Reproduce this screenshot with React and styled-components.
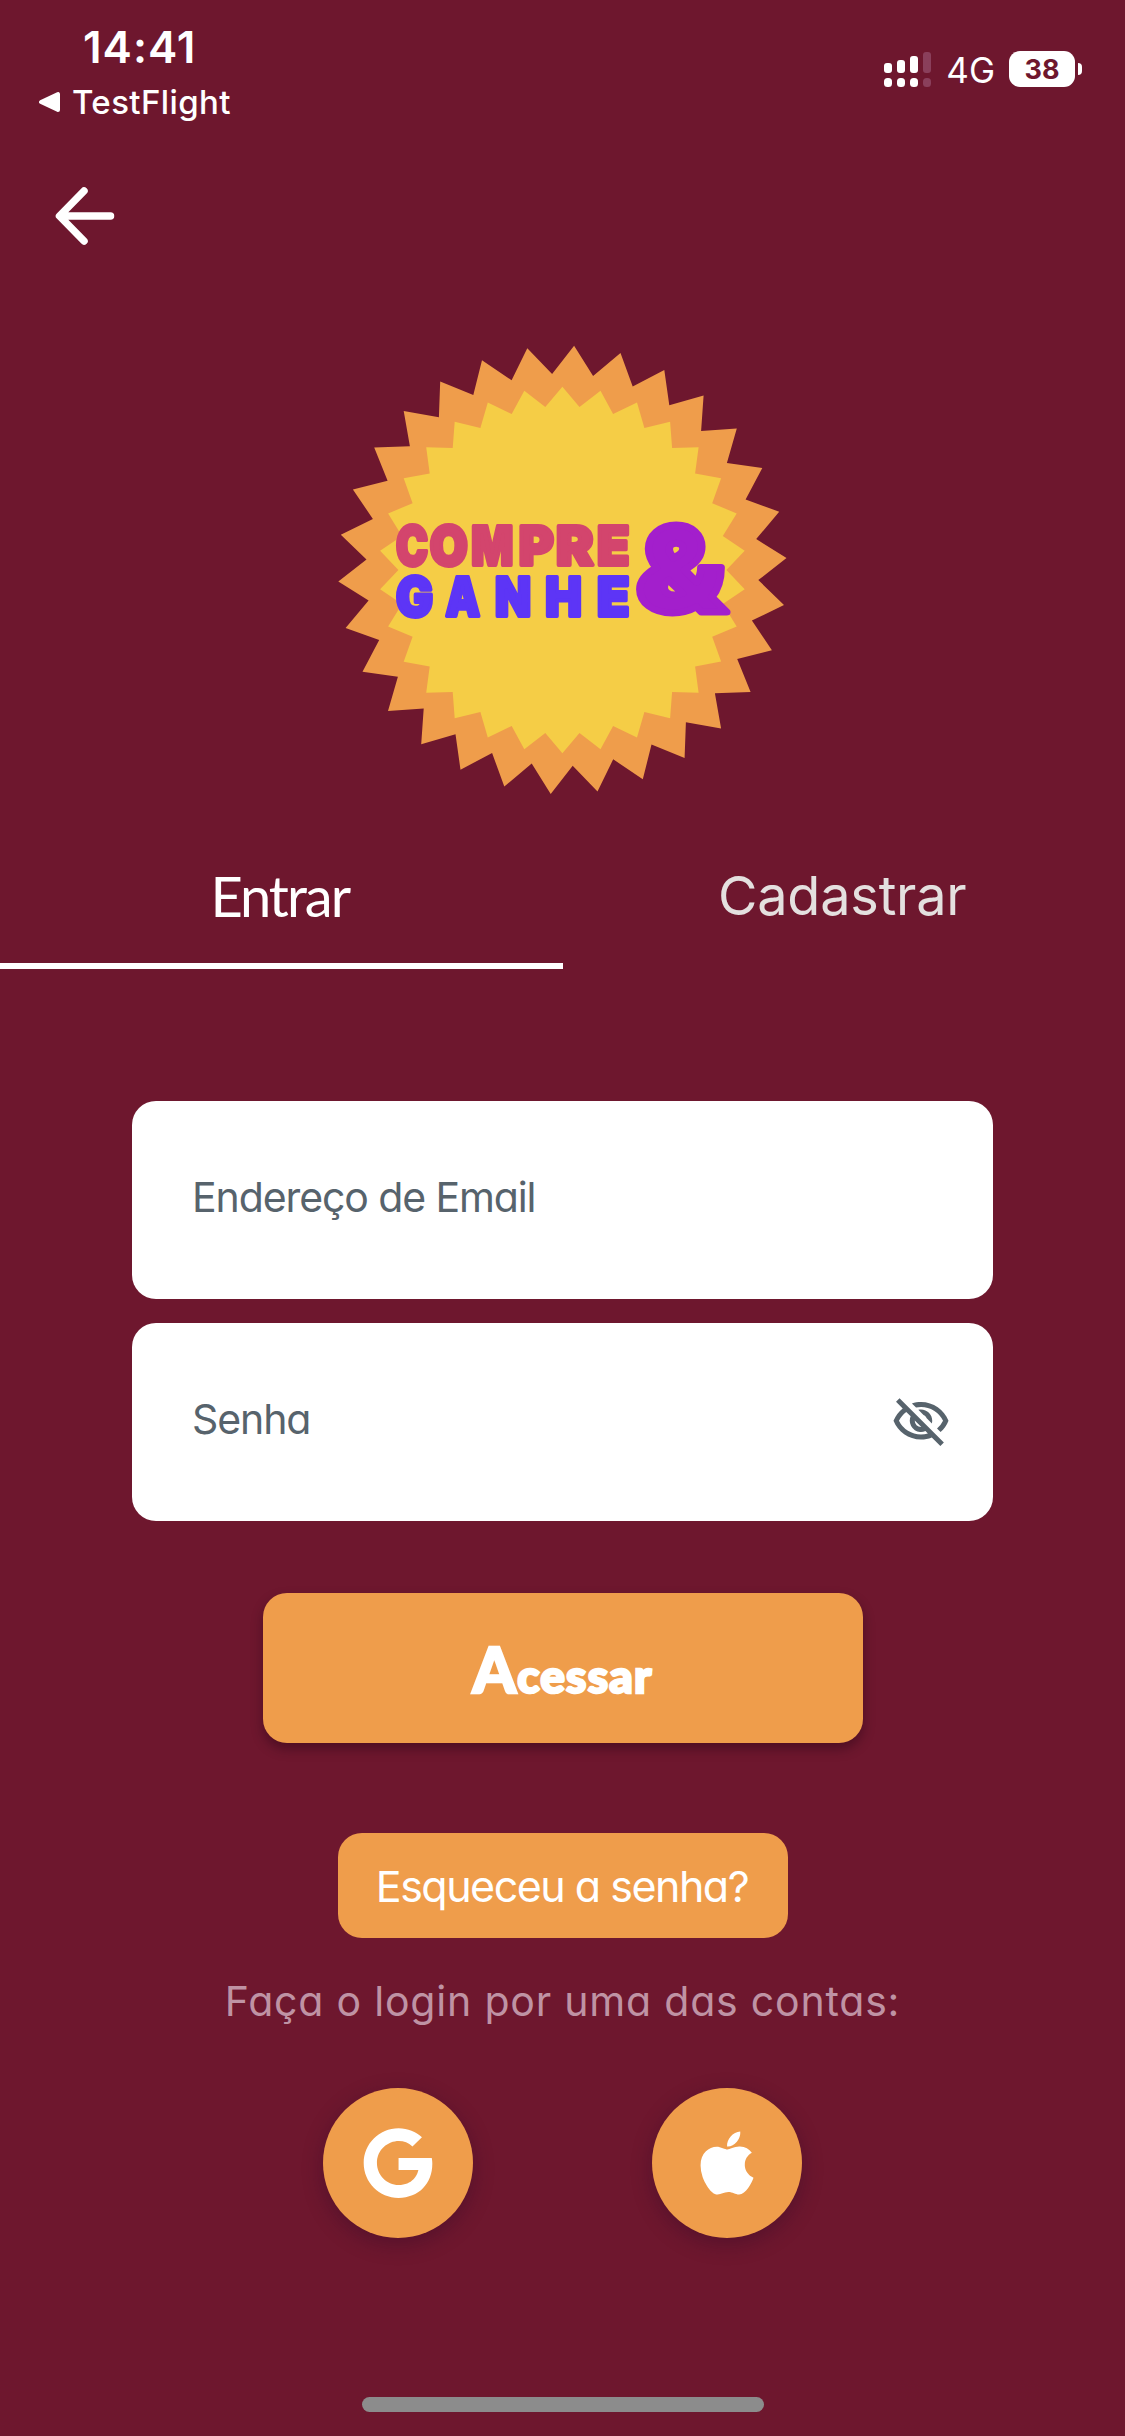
import React, { useState } from "react";
import styled, { createGlobalStyle } from "styled-components";
import { FaApple, FaGoogle } from "react-icons/fa";
import { MdOutlineVisibilityOff } from "react-icons/md";

const GlobalStyle = createGlobalStyle`
  * {
    box-sizing: border-box;
  }

  body {
    margin: 0;
    background: #6e172e;
  }

  button,
  input {
    margin: 0;
    padding: 0;
    border: 0;
    background: none;
    font-family: inherit;
  }
`;

const Screen = styled.div`
  display: flex;
  flex-direction: column;
  align-items: center;
  width: 1125px;
  height: 2436px;
  overflow: hidden;
  background: #6e172e;
  color: #ffffff;
  font-family: Inter, "Liberation Sans", sans-serif;
`;

const StatusBar = styled.header`
  display: flex;
  justify-content: space-between;
  width: 100%;
  height: 132px;
  padding: 20px 43px 0 39px;
`;

const Clock = styled.div`
  padding-left: 44px;
  font-size: 44px;
  font-weight: 600;
  line-height: 54px;
  letter-spacing: 1px;
`;

const BackToApp = styled.div`
  display: flex;
  align-items: center;
  gap: 11px;
  margin-top: 7px;
  font-size: 33px;
  font-weight: 500;
  line-height: 42px;
  letter-spacing: 0.4px;
`;

const StatusIcons = styled.div`
  display: flex;
  align-items: center;
  height: 36px;
  margin-top: 31px;
`;

const Network = styled.span`
  margin: 2px 14px 0 15px;
  font-size: 35px;
  line-height: 36px;
`;

const Battery = styled.span`
  width: 66px;
  height: 36px;
  border-radius: 11px;
  background: #ffffff;
  color: #6e172e;
  font-size: 27px;
  font-weight: 700;
  line-height: 37px;
  text-align: center;
`;

const BatteryCap = styled.span`
  width: 4px;
  height: 12px;
  margin-left: 3px;
  border-radius: 0 6px 6px 0;
  background: #ffffff;
`;

const BackButton = styled.button`
  align-self: flex-start;
  width: 72px;
  height: 72px;
  margin: 48px 0 0 49px;
  color: #ffffff;
`;

const Logo = styled.svg`
  display: block;
  flex: none;
  width: 480px;
  height: 480px;
  margin: 78px 5px 0 0;
  font-family: Inter, "Liberation Sans", sans-serif;
  font-weight: 900;
`;

const Tabs = styled.nav`
  display: flex;
  flex: none;
  width: 100%;
  height: 129px;
  margin-top: 30px;
`;

const Tab = styled.button`
  flex: 1;
  border-bottom: 6px solid ${({ $active }) => ($active ? "#ffffff" : "transparent")};
  color: ${({ $active }) => ($active ? "#ffffff" : "#e4e0df")};
  font-size: ${({ $active }) => ($active ? "56px" : "54px")};
  font-family: ${({ $active }) =>
    $active ? 'Lato, "Liberation Sans", sans-serif' : "inherit"};
  font-weight: 400;
  line-height: 68px;
  letter-spacing: ${({ $active }) => ($active ? "-2px" : "-0.2px")};
  padding: 0 3px 12px 0;
`;

const Form = styled.form`
  display: flex;
  flex-direction: column;
  align-items: center;
  flex: none;
  width: 861px;
  margin-top: 132px;
  font-feature-settings: "cv11";
`;

const Field = styled.label`
  display: flex;
  align-items: center;
  width: 100%;
  height: 198px;
  margin-bottom: 24px;
  padding: 0 42px 0 60px;
  border-radius: 24px;
  background: #ffffff;
  color: #57636c;
`;

const Input = styled.input`
  flex: 1;
  min-width: 0;
  padding-bottom: 6px;
  outline: none;
  color: #57636c;
  font-size: 41px;
  font-feature-settings: inherit;
  letter-spacing: -1.1px;

  &::placeholder {
    color: #57636c;
    opacity: 1;
  }
`;

const SubmitButton = styled.button`
  width: 600px;
  height: 150px;
  margin-top: 48px;
  padding-top: 8px;
  border-radius: 24px;
  background: #ef9d4b;
  box-shadow: 0 6px 12px rgba(30, 0, 20, 0.4);
  color: #ffffff;
  font-family: Lato, "Liberation Sans", sans-serif;
`;

const SubmitLabel = styled.span`
  display: block;
  font-size: 46px;
  font-weight: 900;
  line-height: 64px;
  letter-spacing: 1.2px;
  -webkit-text-stroke: 2.5px #ffffff;

  &::first-letter {
    font-size: 62px;
  }
`;

const ForgotButton = styled.button`
  width: 450px;
  height: 105px;
  margin-top: 90px;
  padding-right: 1px;
  border-radius: 24px;
  background: #ef9d4b;
  color: #ffffff;
  font-size: 43px;
  font-feature-settings: inherit;
  letter-spacing: -1.5px;
`;

const Hint = styled.p`
  margin: 35px 0 0;
  color: #bf93a4;
  font-size: 41px;
  line-height: 56px;
  letter-spacing: 0.8px;
  white-space: nowrap;
`;

const SocialRow = styled.div`
  display: flex;
  gap: 179px;
  margin-top: 59px;
`;

const SocialButton = styled.button`
  display: flex;
  align-items: center;
  justify-content: center;
  width: 150px;
  height: 150px;
  border-radius: 50%;
  background: #ef9d4b;
  box-shadow: 0 6px 20px rgba(40, 10, 40, 0.35);
  color: #ffffff;
  font-size: 72px;
`;

const HomeIndicator = styled.div`
  flex: none;
  width: 402px;
  height: 15px;
  margin-top: auto;
  margin-bottom: 24px;
  border-radius: 8px;
  background: #8c8c8c;
`;

const starPoints = (cx, cy, outer, inner, offset) => {
  const points = [];
  for (let i = 0; i < 60; i++) {
    const r = i % 2 === 0 ? outer : inner;
    const angle = ((offset + i * 6) * Math.PI) / 180;
    points.push(
      `${(cx + r * Math.sin(angle)).toFixed(1)},${(cy - r * Math.cos(angle)).toFixed(1)}`
    );
  }
  return points.join(" ");
};

// [letter, x, width]
const compre = [
  ["C", 76, 32],
  ["O", 109.7, 38],
  ["M", 151.3, 42],
  ["P", 198.7, 35],
  ["R", 236, 37.5],
  ["E", 277, 32.5],
];

const ganhe = [
  ["G", 76, 37],
  ["A", 125.5, 34.5],
  ["N", 175, 36],
  ["H", 225.3, 36.5],
  ["E", 277, 32.5],
];

const LogoWord = ({ letters, y, color }) => (
  <text y={y} fontSize="54" fill={color} stroke={color} strokeWidth="3.8">
    {letters.map(([letter, x, width]) => (
      <tspan key={letter} x={x} textLength={width} lengthAdjust="spacingAndGlyphs">
        {letter}
      </tspan>
    ))}
  </text>
);

const CompreGanheLogo = () => (
  <Logo viewBox="0 0 480 480">
    <polygon points={starPoints(242.4, 239.8, 224.4, 196.2, 3)} fill="#ef9d4b" />
    <polygon points={starPoints(242.4, 240, 183.3, 164, 0)} fill="#f5cd46" />
    <g strokeLinejoin="round">
      <LogoWord letters={compre} y="235.2" color="#d3456d" />
      <LogoWord letters={ganhe} y="286.2" color="#5d35f6" />
      <text
        x="316"
        y="282"
        fontSize="118"
        fill="#a31fcc"
        stroke="#a31fcc"
        strokeWidth="7"
        textLength="90"
        lengthAdjust="spacingAndGlyphs"
      >
        &amp;
      </text>
    </g>
  </Logo>
);

const signalBars = [10, 13, 17, 21];

const SignalIcon = () => (
  <svg width="47" height="36" viewBox="0 0 47 36">
    {signalBars.map((height, i) => (
      <g key={i} fill={i === 3 ? "#8a3f5b" : "#ffffff"}>
        <rect x={i * 13} y={22 - height} width="8" height={height} rx="3" />
        <rect x={i * 13} y="27" width="8" height="9" rx="3.5" />
      </g>
    ))}
  </svg>
);

const App = () => {
  const [activeTab, setActiveTab] = useState("Entrar");

  return (
    <>
      <GlobalStyle />
      <Screen>
        <StatusBar>
          <div>
            <Clock>14:41</Clock>
            <BackToApp>
              <svg width="22" height="22" viewBox="0 0 22 22">
                <path
                  d="M2 11 L19 3 V19 Z"
                  fill="#ffffff"
                  stroke="#ffffff"
                  strokeWidth="4"
                  strokeLinejoin="round"
                />
              </svg>
              TestFlight
            </BackToApp>
          </div>
          <StatusIcons>
            <SignalIcon />
            <Network>4G</Network>
            <Battery>38</Battery>
            <BatteryCap />
          </StatusIcons>
        </StatusBar>

        <BackButton aria-label="Voltar">
          <svg width="72" height="72" viewBox="0 0 72 72">
            <path
              d="M35 11 L10.5 36 L35 61 M11 36 H61.5"
              fill="none"
              stroke="currentColor"
              strokeWidth="7.5"
              strokeLinecap="round"
              strokeLinejoin="round"
            />
          </svg>
        </BackButton>

        <CompreGanheLogo />

        <Tabs>
          {["Entrar", "Cadastrar"].map((tab) => (
            <Tab key={tab} $active={activeTab === tab} onClick={() => setActiveTab(tab)}>
              {tab}
            </Tab>
          ))}
        </Tabs>

        <Form onSubmit={(e) => e.preventDefault()}>
          <Field>
            <Input type="email" placeholder="Endereço de Email" />
          </Field>
          <Field>
            <Input type="password" placeholder="Senha" />
            <MdOutlineVisibilityOff size={60} />
          </Field>
          <SubmitButton type="submit">
            <SubmitLabel>Acessar</SubmitLabel>
          </SubmitButton>
          <ForgotButton type="button">Esqueceu a senha?</ForgotButton>
          <Hint>Faça o login por uma das contas:</Hint>
          <SocialRow>
            <SocialButton type="button" aria-label="Google">
              <FaGoogle />
            </SocialButton>
            <SocialButton type="button" aria-label="Apple">
              <FaApple />
            </SocialButton>
          </SocialRow>
        </Form>

        <HomeIndicator />
      </Screen>
    </>
  );
};

export default App;
